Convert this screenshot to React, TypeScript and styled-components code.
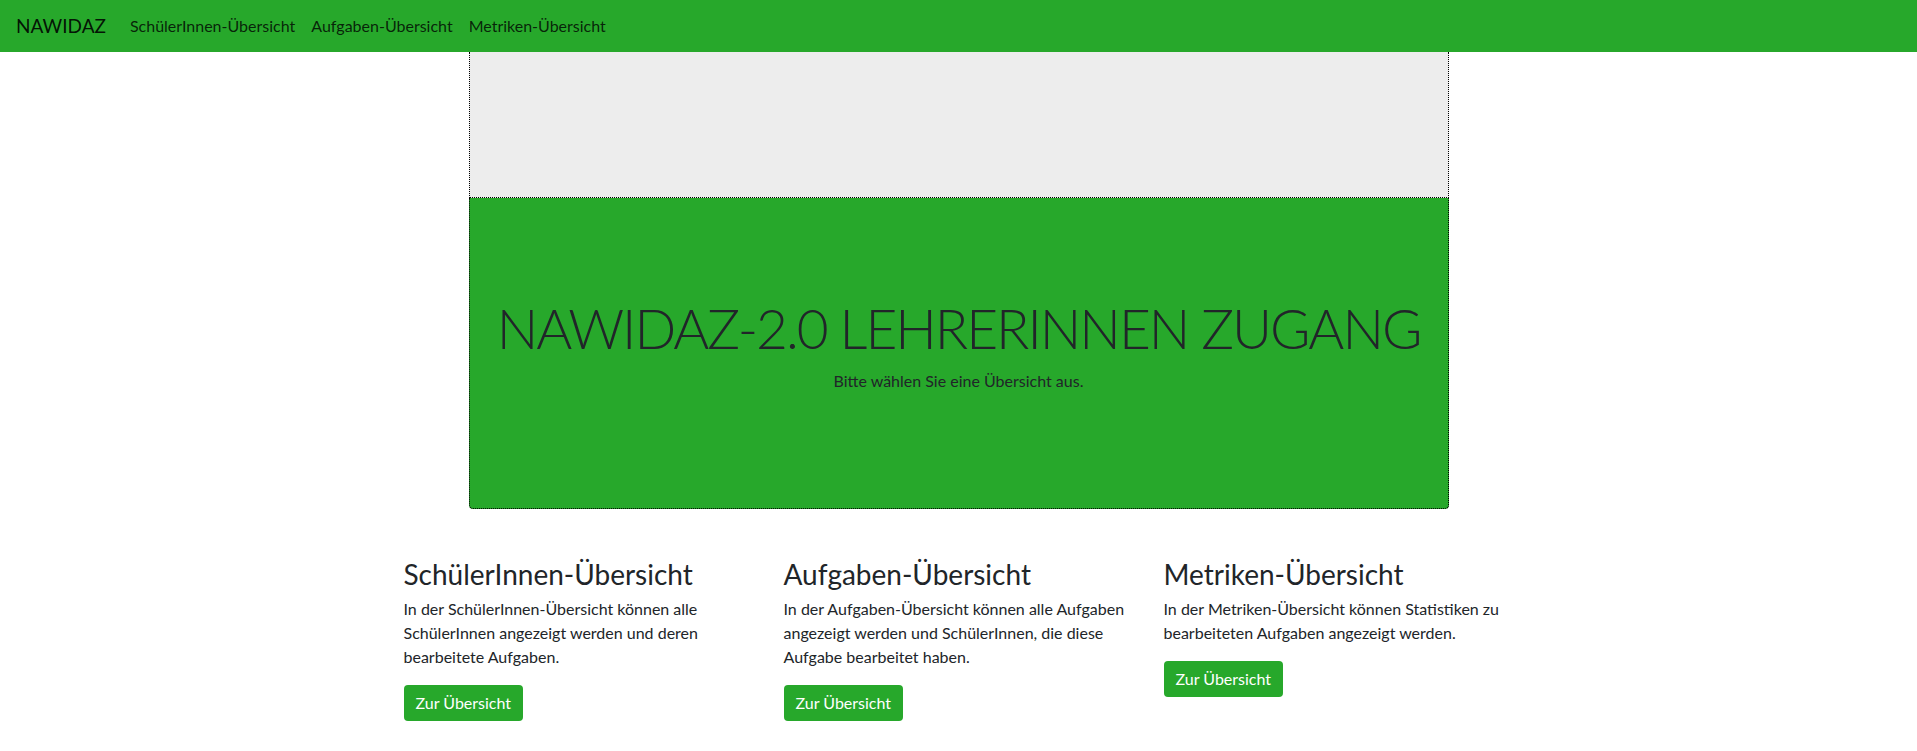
import React from 'react';
import styled, { createGlobalStyle } from 'styled-components';

const GREEN = '#27a82b';

const GlobalStyle = createGlobalStyle`
  * {
    box-sizing: border-box;
  }

  body {
    margin: 0;
    background: #fff;
    color: #212529;
    font-family: Lato, "Open Sans", sans-serif;
    font-size: 16px;
    line-height: 1.5;
  }
`;

const Navbar = styled.nav`
  display: flex;
  align-items: center;
  height: 52px;
  padding: 0 16px;
  background-color: ${GREEN};
`;

const Brand = styled.a`
  margin-right: 16px;
  font-size: 19px;
  color: rgba(0, 0, 0, 0.9);
  text-decoration: none;
`;

const NavLinks = styled.div`
  display: flex;
`;

const NavLink = styled.a`
  padding: 8px;
  font-size: 16px;
  color: rgba(0, 0, 0, 0.8);
  text-decoration: none;
`;

const Hero = styled.div`
  width: 980px;
  margin: 0 auto;
`;

const Banner = styled.div`
  height: 146px;
  background-color: #ededed;
  border: 1px dotted #000;
  border-top: none;
`;

const Jumbotron = styled.div`
  display: flex;
  flex-direction: column;
  align-items: center;
  justify-content: center;
  height: 311px;
  padding-bottom: 18px;
  background-color: ${GREEN};
  border: 1px dotted #000;
  border-top: none;
  border-radius: 0 0 4px 4px;
`;

const Title = styled.h1`
  margin: 0 0 8px;
  font-size: 55px;
  font-weight: 300;
  line-height: 1.2;
  letter-spacing: -2px;
  white-space: nowrap;
  color: #212529;
`;

const Lead = styled.p`
  margin: 0;
  font-size: 16px;
`;

const Container = styled.div`
  display: grid;
  grid-template-columns: repeat(3, 1fr);
  width: 1140px;
  margin: 0 auto;
  padding-top: 49px;
`;

const Column = styled.div`
  padding: 0 15px;
`;

const ColumnTitle = styled.h3`
  margin: 0 0 5px;
  font-size: 28px;
  font-weight: 400;
  line-height: 1.2;
`;

const Text = styled.p`
  margin: 0 0 16px;
`;

const Button = styled.a`
  display: inline-block;
  padding: 6px 12px;
  font-size: 16px;
  line-height: 1.5;
  color: #fff;
  background-color: ${GREEN};
  border-radius: 4px;
  text-decoration: none;
`;

const sections = [
  {
    title: 'SchülerInnen-Übersicht',
    text: 'In der SchülerInnen-Übersicht können alle SchülerInnen angezeigt werden und deren bearbeitete Aufgaben.',
  },
  {
    title: 'Aufgaben-Übersicht',
    text: 'In der Aufgaben-Übersicht können alle Aufgaben angezeigt werden und SchülerInnen, die diese Aufgabe bearbeitet haben.',
  },
  {
    title: 'Metriken-Übersicht',
    text: 'In der Metriken-Übersicht können Statistiken zu bearbeiteten Aufgaben angezeigt werden.',
  },
];

const App: React.FC = () => {
  return (
    <>
      <GlobalStyle />
      <Navbar>
        <Brand href="#">NAWIDAZ</Brand>
        <NavLinks>
          {sections.map((s) => (
            <NavLink key={s.title} href="#">{s.title}</NavLink>
          ))}
        </NavLinks>
      </Navbar>
      <Hero>
        <Banner />
        <Jumbotron>
          <Title>NAWIDAZ-2.0 LEHRERINNEN ZUGANG</Title>
          <Lead>Bitte wählen Sie eine Übersicht aus.</Lead>
        </Jumbotron>
      </Hero>
      <Container>
        {sections.map((s) => (
          <Column key={s.title}>
            <ColumnTitle>{s.title}</ColumnTitle>
            <Text>{s.text}</Text>
            <Button href="#">Zur Übersicht</Button>
          </Column>
        ))}
      </Container>
    </>
  );
};

export default App;
